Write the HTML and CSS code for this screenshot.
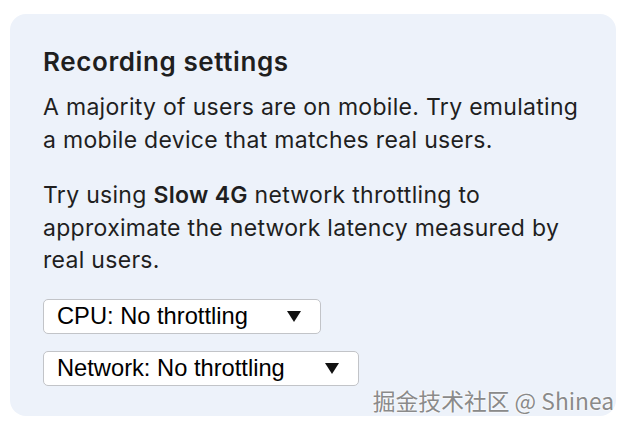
FILE: index.html
```html
<!DOCTYPE html>
<html>
<head>
<meta charset="utf-8">
<link rel="stylesheet" href="styles.css">
</head>
<body>
<div class="card">
  <h2 class="title">Recording settings</h2>
  <p class="text">A majority of users are on mobile. Try emulating a mobile device that matches real users.</p>
  <p class="text">Try using <b>Slow 4G</b> network throttling to approximate the network latency measured by real users.</p>
  <div class="selects">
    <div class="select cpu"><span>CPU: No throttling</span><span class="arrow"></span></div>
    <div class="select net"><span>Network: No throttling</span><span class="arrow"></span></div>
  </div>
  <div class="watermark">掘金技术社区 @ Shinea</div>
</div>
</body>
</html>
```
FILE: styles.css
```css
html, body { margin: 0; padding: 0; background: #fff; }
body { width: 630px; height: 430px; overflow: hidden; }
.card {
  position: relative;
  margin: 14px 0 0 10px;
  width: 606px;
  height: 402px;
  box-sizing: border-box;
  background: #edf2fa;
  border-radius: 16px;
  padding: 31px 33px 0 33px;
  font-family: Inter, "Noto Sans", sans-serif;
  color: #1f1f1f;
}
.title {
  margin: 0 0 12px 0;
  font-size: 26px;
  font-weight: 600;
  letter-spacing: 0.6px;
  line-height: 34px;
}
.text {
  margin: 0;
  font-size: 23px;
  letter-spacing: 0.3px;
  line-height: 32.5px;
}
.text + .text { margin-top: 23px; }
.text b { font-weight: 600; }
.selects { display: flex; flex-direction: column; align-items: flex-start; gap: 17px; margin-top: 22px; }
.select {
  display: flex;
  align-items: center;
  justify-content: space-between;
  height: 35px;
  box-sizing: border-box;
  background: #fff;
  border: 1.5px solid #c2c4c8;
  border-radius: 5px;
  font-family: "Liberation Sans", Arial, sans-serif;
  font-size: 23.7px;
  color: #000;
  padding: 0 19px 0 13px;
}
.cpu { width: 278px; }
.net { width: 316px; }
.arrow {
  width: 0; height: 0;
  border-left: 7.5px solid transparent;
  border-right: 7.5px solid transparent;
  border-top: 11px solid #111;
}
.watermark {
  position: absolute;
  right: 2px;
  bottom: 1px;
  font-family: "Noto Sans CJK SC", "Noto Sans", sans-serif;
  font-size: 22.8px;
  color: #8a8a8a;
  text-shadow: 0 0 2px #fff, 0 0 2px #fff;
  line-height: 28px;
}
```
